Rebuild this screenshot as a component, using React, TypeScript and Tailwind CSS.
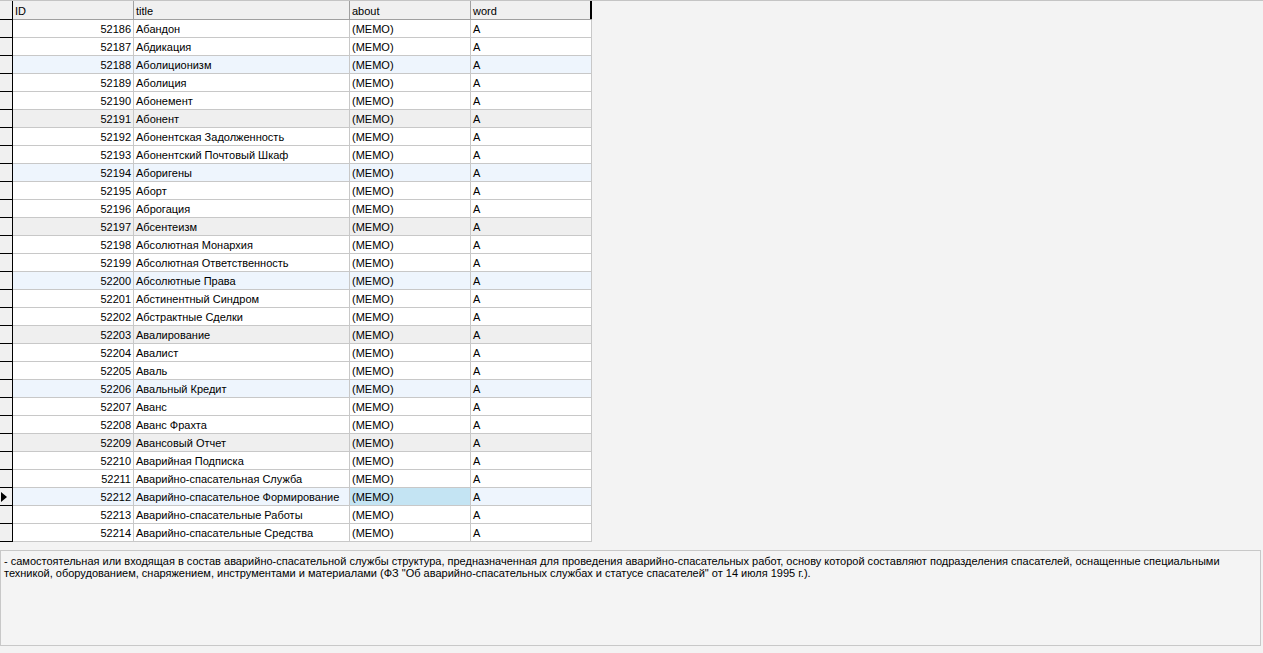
import React from "react";

const titles = [
  "Абандон",
  "Абдикация",
  "Аболиционизм",
  "Аболиция",
  "Абонемент",
  "Абонент",
  "Абонентская Задолженность",
  "Абонентский Почтовый Шкаф",
  "Аборигены",
  "Аборт",
  "Аброгация",
  "Абсентеизм",
  "Абсолютная Монархия",
  "Абсолютная Ответственность",
  "Абсолютные Права",
  "Абстинентный Синдром",
  "Абстрактные Сделки",
  "Авалирование",
  "Авалист",
  "Аваль",
  "Авальный Кредит",
  "Аванс",
  "Аванс Фрахта",
  "Авансовый Отчет",
  "Аварийная Подписка",
  "Аварийно-спасательная Служба",
  "Аварийно-спасательное Формирование",
  "Аварийно-спасательные Работы",
  "Аварийно-спасательные Средства",
];

const SELECTED = 26;

function rowBg(i: number) {
  if (i === SELECTED) return "bg-[#eef5fd]";
  if (i % 3 === 2) return Math.floor(i / 3) % 2 === 0 ? "bg-[#eef5fd]" : "bg-[#efefef]";
  return "bg-white";
}

export default function App() {
  return (
    <div
      className="w-[1263px] h-[653px] bg-[#f3f3f3] border-t border-[#c4c4c4] text-[11px] leading-[13px] text-black overflow-hidden"
      style={{ fontFamily: '"Liberation Sans", Arial, sans-serif' }}
    >
      <div className="w-[592px]">
        {/* header */}
        <div className="flex h-[19px] bg-[#f0f0f0] border-b border-[#a0a0a0]">
          <div className="w-[13px] shrink-0 border-r border-black border-b border-b-black -mb-px" />
          <div className="w-[121px] shrink-0 border-r border-[#a0a0a0] pl-[2px] pt-[4px]">ID</div>
          <div className="w-[216px] shrink-0 border-r border-[#a0a0a0] pl-[2px] pt-[4px]">title</div>
          <div className="w-[121px] shrink-0 border-r border-[#a0a0a0] pl-[2px] pt-[4px]">about</div>
          <div className="w-[121px] shrink-0 border-r-2 border-black pl-[2px] pt-[4px]">word</div>
        </div>
        {titles.map((t, i) => (
          <div key={i} className={`flex h-[18px] ${rowBg(i)}`}>
            <div className="w-[13px] shrink-0 bg-[#f0f0f0] border-r border-b border-black flex items-center justify-start pl-[1px]">
              {i === SELECTED && (
                <svg width="6" height="10" viewBox="0 0 6 10">
                  <path d="M0 0 L6 5 L0 10 Z" fill="#000" />
                </svg>
              )}
            </div>
            <div className="w-[121px] shrink-0 border-r border-b border-[#c8c8c8] text-right pr-[2px] pt-[3px]">
              {52186 + i}
            </div>
            <div className="w-[216px] shrink-0 border-r border-b border-[#c8c8c8] pl-[2px] pt-[3px] whitespace-nowrap overflow-hidden">
              {t}
            </div>
            <div
              className={`w-[121px] shrink-0 border-r border-b border-[#c8c8c8] pl-[2px] pt-[3px] ${
                i === SELECTED ? "bg-[#c4e4f3]" : ""
              }`}
            >
              (MEMO)
            </div>
            <div className="w-[121px] shrink-0 border-r border-b border-[#c8c8c8] pl-[2px] pt-[3px]">А</div>
          </div>
        ))}
      </div>
      <div className="mt-[8px] mr-[2px] h-[96px] bg-[#f4f4f4] border border-[#c8c8c8] px-[3px] pt-[4px] leading-[12px] whitespace-nowrap">
        - самостоятельная или входящая в состав аварийно-спасательной службы структура, предназначенная для проведения
        аварийно-спасательных работ, основу которой составляют подразделения спасателей, оснащенные специальными
        <br />
        техникой, оборудованием, снаряжением, инструментами и материалами (ФЗ "Об аварийно-спасательных службах и
        статусе спасателей" от 14 июля 1995 г.).
      </div>
    </div>
  );
}
